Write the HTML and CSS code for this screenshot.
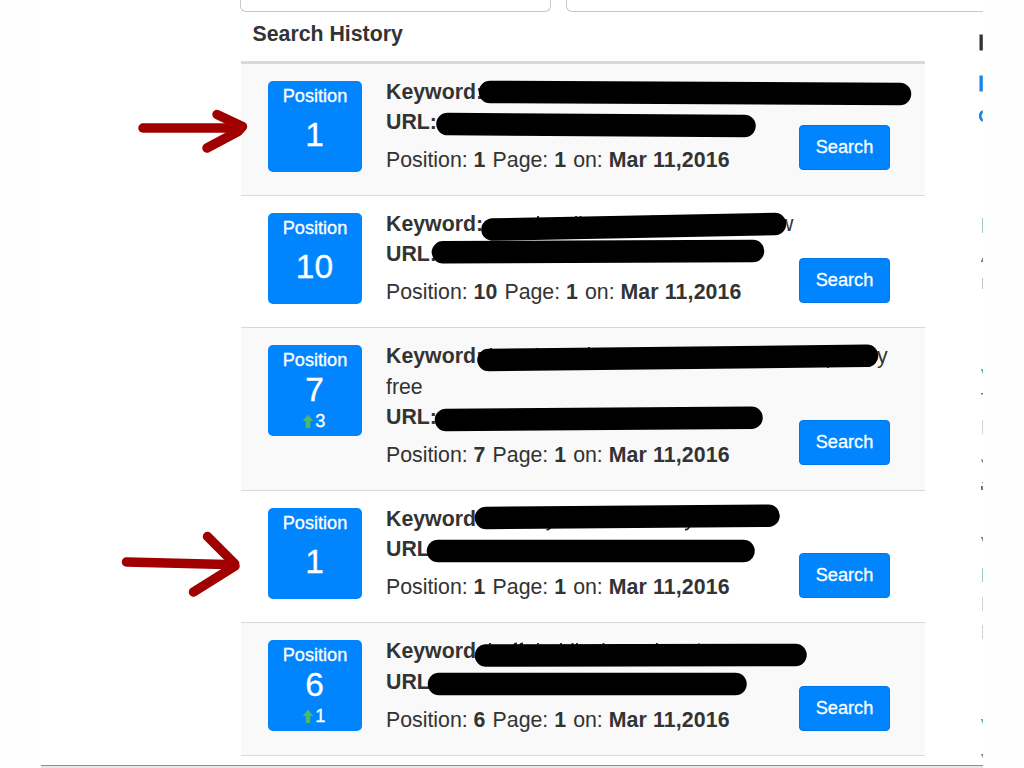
FILE: index.html
```html
<!DOCTYPE html>
<html lang="en">
<head>
<meta charset="utf-8">
<title>Search History</title>
<link rel="stylesheet" href="styles.css">
</head>
<body>
<div class="page">
  <div class="fields"><div class="field"></div><div class="field field-wide"></div></div>
  <div class="content">
    <main class="history">
      <h1 class="title">Search History</h1>
      <section class="row">
        <div class="badge"><span class="label">Position</span><span class="rank">1</span></div>
        <div class="info"><div><b>Keyword:</b></div><div><b>URL:</b></div><div class="meta">Position: <b>1</b> <span>Page: <b>1</b></span> <span>on: <b class="date">Mar 11,2016</b></span></div></div>
        <button class="search">Search</button>
      </section>
      <section class="row">
        <div class="badge"><span class="label">Position</span><span class="rank">10</span></div>
        <div class="info"><div><b>Keyword:</b><span class="gap gap-a"></span>w</div><div><b>URL:</b></div><div class="meta">Position: <b>10</b> <span>Page: <b>1</b></span> <span>on: <b class="date">Mar 11,2016</b></span></div></div>
        <button class="search">Search</button>
      </section>
      <section class="row">
        <div class="badge moved"><span class="label">Position</span><span class="rank">7</span><span class="delta"><svg width="12" height="15" viewBox="0 0 12 15"><path d="M6 .7 11.5 7H8.300v7H3.700V7H.5Z"/></svg>3</span></div>
        <div class="info"><div><b>Keyword:</b><span class="gap gap-b"></span>y</div><div>free</div><div><b>URL:</b></div><div class="meta">Position: <b>7</b> <span>Page: <b>1</b></span> <span>on: <b class="date">Mar 11,2016</b></span></div></div>
        <button class="search">Search</button>
      </section>
      <section class="row">
        <div class="badge"><span class="label">Position</span><span class="rank">1</span></div>
        <div class="info"><div><b>Keyword:</b></div><div><b>URL:</b></div><div class="meta">Position: <b>1</b> <span>Page: <b>1</b></span> <span>on: <b class="date">Mar 11,2016</b></span></div></div>
        <button class="search">Search</button>
      </section>
      <section class="row">
        <div class="badge moved"><span class="label">Position</span><span class="rank">6</span><span class="delta"><svg width="12" height="15" viewBox="0 0 12 15"><path d="M6 .7 11.5 7H8.300v7H3.700V7H.5Z"/></svg>1</span></div>
        <div class="info"><div><b>Keyword:</b></div><div><b>URL:</b></div><div class="meta">Position: <b>6</b> <span>Page: <b>1</b></span> <span>on: <b class="date">Mar 11,2016</b></span></div></div>
        <button class="search">Search</button>
      </section>
    </main>
  </div>
  <div class="footer"></div>
</div>
<svg class="marks" width="1024" height="768" viewBox="0 0 1024 768">
  <!-- clipped right-hand column -->
  <path fill="#333" d="M979.5 34.5h3.3v16h-3.3z"/>
  <path fill="#1684e0" d="M979.5 75.5h3.3v16h-3.3zM982.8 110.3v3q-1.2.6-1.2 2.7t1.2 2.7v3q-3.8-.8-3.8-5.700t3.8-5.700z"/>
  <path fill="#8fc0a6" d="M982 218h.8v15h-.8zM982 568h.8v14h-.8z"/>
  <path fill="#b5b5b5" d="M982 278h.8v11h-.8zM982 420h.6v14h-.6zM982 597h.6v14h-.6zM982 625h.6v14h-.6z"/>
  <path fill="#3ca35c" d="M981 369h1.800v5zM981 719h1.800v5z"/>
  <path fill="#666" d="M982.8 257v5h-2zM981 393h1.800v1.500H981zM981 459.500h1.800v4zM981 486h1.800v4H981zM982 482h.8v1.300h-.8zM981 537h1.800v5zM981 754h1.800v4z"/>
  <!-- redaction strokes -->
  <g class="ticks">
    <path d="M538 216v3M576 216v3M580.500 216v3M614 216v3M653 215.500v3M670.500 216v2M491 348v3M537 348v3M589 347v3M828 365v3M490 643v5M538 643v3M561 643v4M572.500 643v4M577 643v4M603.500 643v3M657 643v3M699 643.500v3"/>
    <path d="M546.500 529.500q3 .5 4.500-3M685 529.500q3 .5 4.500-3M514 646q0-2.500 3-2.500M520 646q0-2.500 3-2.500"/>
  </g>
  <g class="redact">
    <path d="M490 92 900 94"/><path d="M447.500 124 744.500 126"/>
    <path d="M492.500 229.500 775 224"/><path d="M443 252.300 753 251"/>
    <path d="M488.500 360 867 355.800"/><path d="M446 420 751.500 417.700"/>
    <path d="M486 518 768.500 515.700"/><path d="M438 551H743.500"/>
    <path d="M486 655.500 795.500 655"/><path d="M439 684H735.500"/>
  </g>
  <g class="arrow">
    <path d="M143 128H240"/><path d="M217 114.500 242.500 126.500 238 131.500 207 148"/>
    <path d="M126.500 562 226 564.500"/><path d="M207.500 536.500 234.500 563.500 231 567.500M193.500 592 235 566"/>
  </g>
</svg>
</body>
</html>
```
FILE: styles.css
```css
* { box-sizing: border-box; }
body { margin: 0; width: 1024px; height: 768px; overflow: hidden; background: #fefefe; font: 21.3px/30.4px "Liberation Sans", Arial, sans-serif; color: #333; }
.page { width: 942px; height: 768px; margin-left: 41px; background: #fff; overflow: hidden; display: flex; flex-direction: column; }
.fields { display: flex; gap: 15px; height: 12px; padding-left: 199px; flex: none; }
.field { width: 311px; flex: none; border: 1.900px solid #c8c8c8; border-top: 0; border-radius: 0 0 6px 6px; }
.field-wide { width: 500px; }
.content { height: 753px; padding-left: 199.500px; flex: none; }
.history { width: 684.500px; }
.title { margin: 0; padding: 7px 0 0 12px; height: 49px; font-size: 21.3px; line-height: 30.4px; }
.row { display: flex; height: 132.35px; padding: 0 35px 0 27.500px; border-top: 1.400px solid #d9d9d9; background: #fff; }
.row:nth-of-type(odd) { background: #f9f9f9; }
.row:nth-of-type(1) { height: 133.9px; border-top-width: 3px; }
.row:nth-of-type(3) { height: 162.7px; }
.row:last-child { height: 133.500px; border-bottom: 1.400px solid #d9d9d9; }
.badge { display: flex; flex: none; flex-direction: column; align-items: center; width: 94px; height: 91px; margin-top: 17px; border-radius: 5px; background: #0085ff; color: #fff; font-size: 18.2px; -webkit-text-stroke: .3px #fff; }
.row:nth-of-type(1) .badge { margin-top: 16.800px; }
.label { line-height: 30px; }
.rank { padding-right: 1px; font-size: 33.500px; line-height: 48px; }
.moved .rank { line-height: 30.500px; }
.delta { display: flex; align-items: center; gap: 1.500px; padding-right: 3px; line-height: 31px; }
.delta svg { fill: #4cb86c; }
.info { flex: 1; min-width: 0; padding: 13.100px 0 0 24px; white-space: nowrap; }
.row:nth-of-type(1) .info { padding-top: 12.700px; }
.meta { margin-top: 7.600px; }
.meta span { margin-left: 1.200px; }
.date { letter-spacing: .13px; }
.gap { display: inline-block; }
.gap-a { width: 295px; }
.gap-b { width: 394px; }
.search { align-self: flex-end; width: 91px; height: 45px; margin: 0 0 24.700px; padding: 0; flex: none; border: 1px solid #0077e6; border-radius: 4px; background: #0085ff; color: #fff; font: 18.2px "Liberation Sans", Arial, sans-serif; -webkit-text-stroke: .3px #fff; }
.row:last-child .search { margin-bottom: 24.200px; }
.footer { height: 3px; flex: none; border-top: 1px solid #8e8e8e; background: #e8e8e8; }
.marks { position: absolute; left: 0; top: 0; pointer-events: none; }
.ticks { fill: none; stroke: #222; stroke-width: 1.800; }
.redact { fill: none; stroke: #000; stroke-width: 22.500; stroke-linecap: round; }
.arrow { fill: none; stroke: #a10000; stroke-width: 9.500; stroke-linecap: round; stroke-linejoin: round; }
```
